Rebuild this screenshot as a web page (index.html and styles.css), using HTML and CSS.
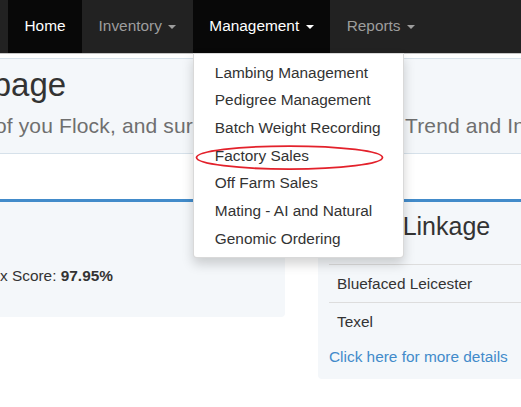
FILE: index.html
```html
<!DOCTYPE html>
<html>
<head>
<meta charset="utf-8">
<title>Homepage</title>
<link rel="stylesheet" href="styles.css">
</head>
<body>
<nav class="navbar">
  <a class="nav-item active">Home</a>
  <a class="nav-item">Inventory <span class="caret"></span></a>
  <div class="dropdown">
    <a class="nav-item active">Management <span class="caret"></span></a>
    <ul class="dropdown-menu">
      <li>Lambing Management</li>
      <li>Pedigree Management</li>
      <li>Batch Weight Recording</li>
      <li class="marked">Factory Sales<svg class="ring" viewBox="0 0 192 30"><ellipse cx="94.5" cy="14.6" rx="93" ry="11.5" fill="none" stroke="#e3212b" stroke-width="1.8"/></svg></li>
      <li>Off Farm Sales</li>
      <li>Mating - AI and Natural</li>
      <li>Genomic Ordering</li>
    </ul>
  </div>
  <a class="nav-item">Reports <span class="caret"></span></a>
</nav>
<div class="spacer"></div>
<section class="jumbotron">
  <div class="jumbo-inner">
    <h1>Welcome to your homepage</h1>
    <p class="lead">Here, you can see a quick summary of you Flock, and survey an overall genetic Trend and Index.</p>
  </div>
</section>
<div class="row">
  <div class="panel panel-left">
    <p class="score">Flock Index Score: <b>97.95%</b></p>
  </div>
  <div class="panel panel-right">
    <h3>Breed Linkage</h3>
    <table class="breeds">
      <tr><td>Bluefaced Leicester</td></tr>
      <tr><td>Texel</td></tr>
    </table>
    <a class="more">Click here for more details</a>
  </div>
</div>
</body>
</html>
```
FILE: styles.css
```css
* { box-sizing: border-box; }
html, body { margin: 0; }
body {
  width: 521px;
  height: 407px;
  overflow: hidden;
  font-family: "Liberation Sans", Arial, sans-serif;
  font-size: 15.4px;
  color: #333;
  background: #fff;
}
.navbar {
  display: flex;
  height: 54px;
  background: #222;
  border-bottom: 1px solid #c6c6c6;
  padding-left: 8px;
  position: relative;
  z-index: 10;
}
.nav-item {
  display: block;
  height: 53px;
  padding: 15px 16.5px 0;
  line-height: 22px;
  color: #9d9d9d;
  text-decoration: none;
  white-space: nowrap;
}
.nav-item.active {
  background: #080808;
  color: #fff;
}
.caret {
  display: inline-block;
  width: 0;
  height: 0;
  margin-left: 2.2px;
  vertical-align: middle;
  border-top: 4.4px solid;
  border-left: 4.4px solid transparent;
  border-right: 4.4px solid transparent;
}
.dropdown { position: relative; }
.dropdown-menu {
  position: absolute;
  top: 53px;
  left: 0;
  margin: 0;
  padding: 4.5px 0;
  list-style: none;
  background: #fff;
  border: 1px solid rgba(0,0,0,.15);
  border-radius: 0 0 4px 4px;
  box-shadow: 0 6px 12px rgba(0,0,0,.175);
  white-space: nowrap;
}
.dropdown-menu li {
  position: relative;
  padding: 3px 22px 3px 21px;
  line-height: 21.7px;
  color: #333;
}
.ring {
  position: absolute;
  left: 1px;
  top: 1px;
  width: 192px;
  height: 30px;
  overflow: visible;
}
.spacer { height: 4px; }
.jumbotron {
  height: 96px;
  padding-top: 8.4px;
  background: #f4f7fa;
  border-top: 1px solid #d6e1ea;
  border-bottom: 1px solid #d6e1ea;
  overflow: hidden;
  white-space: nowrap;
}
.jumbo-inner { margin-left: -346px; }
.jumbotron h1 {
  margin: 0;
  font-size: 33px;
  line-height: 36.3px;
  font-weight: normal;
  color: #333;
}
.lead {
  margin: 8.4px 0 0 -5px;
  font-size: 21px;
  line-height: 28px;
  letter-spacing: 0.15px;
  color: #6f6f6f;
}
.row {
  display: flex;
  align-items: flex-start;
  gap: 33px;
  margin-top: 45px;
}
.panel {
  background: #f4f7fa;
  border-top: 3px solid #428bca;
  border-radius: 0 0 4px 4px;
  white-space: nowrap;
}
.panel-left {
  flex: none;
  width: 356px;
  height: 118px;
  margin-left: -71px;
  padding-top: 62.6px;
}
.score {
  margin: 0;
  line-height: 21.6px;
}
.panel-right {
  flex: 1;
  min-width: 0;
  margin-right: -40px;
  padding: 11.3px 11px 10.5px;
}
.panel-right h3 {
  margin: 0 0 23.2px;
  font-size: 25px;
  line-height: 27.5px;
  font-weight: normal;
}
.breeds {
  width: 100%;
  border-collapse: collapse;
}
.breeds td {
  border-top: 1px solid #ddd;
  padding: 8px;
  line-height: 21px;
}
.more {
  display: block;
  margin-top: 6.5px;
  line-height: 21.6px;
  color: #428bca;
  text-decoration: none;
}
```
